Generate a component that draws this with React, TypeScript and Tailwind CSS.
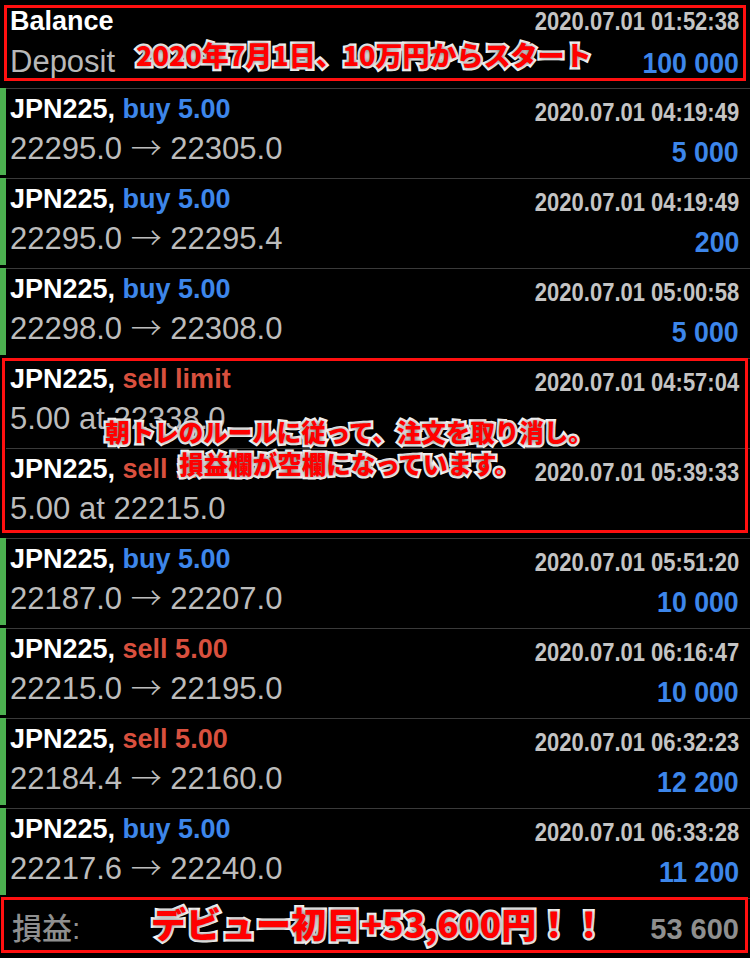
import React from 'react';

type Kind = 'buy' | 'sell' | 'limit';

interface Deal {
  kind: Kind;
  side: string;
  from: string;
  to?: string;
  time: string;
  amount?: string;
}

const deals: Deal[] = [
  { kind: 'buy', side: 'buy 5.00', from: '22295.0', to: '22305.0', time: '04:19:49', amount: '5 000' },
  { kind: 'buy', side: 'buy 5.00', from: '22295.0', to: '22295.4', time: '04:19:49', amount: '200' },
  { kind: 'buy', side: 'buy 5.00', from: '22298.0', to: '22308.0', time: '05:00:58', amount: '5 000' },
  { kind: 'limit', side: 'sell limit', from: '5.00 at 22338.0', time: '04:57:04' },
  { kind: 'limit', side: 'sell limit', from: '5.00 at 22215.0', time: '05:39:33' },
  { kind: 'buy', side: 'buy 5.00', from: '22187.0', to: '22207.0', time: '05:51:20', amount: '10 000' },
  { kind: 'sell', side: 'sell 5.00', from: '22215.0', to: '22195.0', time: '06:16:47', amount: '10 000' },
  { kind: 'sell', side: 'sell 5.00', from: '22184.4', to: '22160.0', time: '06:32:23', amount: '12 200' },
  { kind: 'buy', side: 'buy 5.00', from: '22217.6', to: '22240.0', time: '06:33:28', amount: '11 200' },
];

const note =
  "absolute font-['Noto_Sans_CJK_JP',sans-serif] font-black text-[#ff0000] whitespace-nowrap [-webkit-text-stroke:5px_#ffffff] [paint-order:stroke_fill] [text-shadow:0_0_4px_rgba(0,0,0,0.6)]";

const dateCls =
  'text-[25px] leading-[28px] font-bold text-[#c4c4c4] whitespace-nowrap origin-right scale-x-[0.88]';
const amountCls =
  'text-[29px] leading-[32px] font-bold text-[#3d86ea] whitespace-nowrap origin-right scale-x-[0.92]';

function DealRow({ deal }: { deal: Deal }) {
  const sideColor = deal.kind === 'buy' ? 'text-[#3d86ea]' : 'text-[#d9503e]';
  return (
    <div className="flex h-[90px]">
      <div className={`w-[6px] mb-[3px] ${deal.kind === 'limit' ? '' : 'bg-[#4cb050]'}`} />
      <div className="flex-1 flex justify-between border-t border-[#3a3a3a] pl-[4px] pr-[11px]">
        <div className="pt-[5px]">
          <div className="text-[27px] leading-[30px] font-bold text-white whitespace-nowrap">
            JPN225, <span className={sideColor}>{deal.side}</span>
          </div>
          <div className="mt-[8px] h-[34px] text-[31px] leading-[34px] text-[#bcbcbc] whitespace-nowrap">
            {deal.from}
            {deal.to && (
              <>
                {' '}
                <span className="font-['Noto_Sans_CJK_JP'] font-light leading-[0]">→</span> {deal.to}
              </>
            )}
          </div>
        </div>
        <div className="pt-[9px] flex flex-col items-end">
          <div className={dateCls}>2020.07.01 {deal.time}</div>
          {deal.amount && <div className={`mt-[10px] ${amountCls}`}>{deal.amount}</div>}
        </div>
      </div>
    </div>
  );
}

export default function App() {
  return (
    <div className="relative w-[750px] h-[958px] bg-black overflow-hidden font-['Liberation_Sans','Noto_Sans_CJK_JP',sans-serif]">
      {/* balance */}
      <div className="flex justify-between h-[88px] pl-[10px] pr-[11px]">
        <div className="pt-[6px]">
          <div className="text-[27px] leading-[30px] font-bold text-white">Balance</div>
          <div className="mt-[9px] text-[31px] leading-[34px] text-[#b8b8b8]">Deposit</div>
        </div>
        <div className="pt-[7px] flex flex-col items-end">
          <div className={dateCls}>2020.07.01 01:52:38</div>
          <div className={`mt-[12px] ${amountCls}`}>100 000</div>
        </div>
      </div>

      {deals.map((d, i) => (
        <DealRow key={i} deal={d} />
      ))}

      {/* total */}
      <div className="flex h-[60px]">
        <div className="w-[6px]" />
        <div className="flex-1 flex items-center justify-between border-t border-[#3a3a3a] pl-[6px] pr-[11px]">
          <div className="text-[30px] leading-[34px] font-medium text-[#8f8f8f]">損益:</div>
          <div className="text-[29px] leading-[32px] font-bold text-[#8f8f8f]">53 600</div>
        </div>
      </div>

      {/* annotations */}
      <div className="absolute left-[4px] top-[5px] w-[742px] h-[76px] border-[3px] border-[#ff1010]" />
      <div className="absolute left-[2px] top-[358px] w-[746px] h-[175px] border-[3px] border-[#ff1010]" />
      <div className="absolute left-[1px] top-[897px] w-[747px] h-[56px] border-[3px] border-[#ff1010]" />

      <div className={`${note} left-[136px] top-[41px] text-[27px] leading-[28px]`}>
        2020年7月1日、10万円からスタート
      </div>
      <div className={`${note} left-[98px] top-[416px] w-[502px] text-center text-[24.5px] leading-[32px]`}>
        朝トレのルールに従って、注文を取り消し。
        <br />
        損益欄が空欄になっています。
      </div>
      <div className={`${note} left-[151px] top-[904px] text-[35px] leading-[38px]`}>
        デビュー初日+53,600円！！
      </div>
    </div>
  );
}
